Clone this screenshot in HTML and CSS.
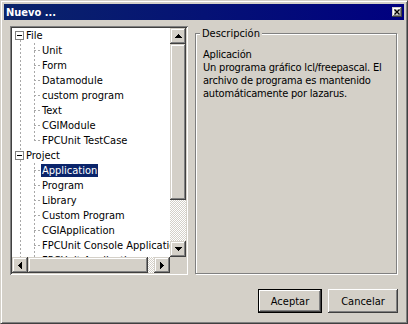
FILE: index.html
```html
<!DOCTYPE html>
<html lang="es">
<head>
    <meta charset="UTF-8">
    <title>Nuevo ...</title>
    <link rel="stylesheet" href="styles.css">
</head>
<body>
    <div class="window">
        <div class="titlebar">
            <span class="title">Nuevo ...</span>
            <span class="close raised">
                <svg width="6" height="6" viewBox="0 0 6 6"><path d="M0.5 0.5l5 5M5.5 0.5l-5 5" stroke="#000" stroke-width="1.3"/></svg>
            </span>
        </div>

        <div class="client">
            <div class="panes">
                <div class="tree sunken">
                    <div class="tree-body">
                        <div class="tree-view">
                            <div class="node">
                                <div class="row top"><span class="expander"></span><span class="label">File</span></div>
                                <div class="children">
                                    <div class="row leaf"><span class="label">Unit</span></div>
                                    <div class="row leaf"><span class="label">Form</span></div>
                                    <div class="row leaf"><span class="label">Datamodule</span></div>
                                    <div class="row leaf"><span class="label">custom program</span></div>
                                    <div class="row leaf"><span class="label">Text</span></div>
                                    <div class="row leaf"><span class="label">CGIModule</span></div>
                                    <div class="row leaf"><span class="label">FPCUnit TestCase</span></div>
                                </div>
                            </div>
                            <div class="node">
                                <div class="row top"><span class="expander"></span><span class="label">Project</span></div>
                                <div class="children more">
                                    <div class="row leaf"><span class="label selected">Application</span></div>
                                    <div class="row leaf"><span class="label">Program</span></div>
                                    <div class="row leaf"><span class="label">Library</span></div>
                                    <div class="row leaf"><span class="label">Custom Program</span></div>
                                    <div class="row leaf"><span class="label">CGIApplication</span></div>
                                    <div class="row leaf"><span class="label">FPCUnit Console Application</span></div>
                                    <div class="row leaf"><span class="label">FPCUnit Application</span></div>
                                </div>
                            </div>
                        </div>
                        <div class="vscroll">
                            <span class="sb-btn raised"><svg width="7" height="4"><path d="M3 0h1v1h1v1h1v1h1v1H0V3h1V2h1V1h1z"/></svg></span>
                            <span class="vthumb raised"></span>
                            <span class="track"></span>
                            <span class="sb-btn raised"><svg width="7" height="4"><path d="M0 0h7v1H6v1H5v1H4v1H3V3H2V2H1V1H0z"/></svg></span>
                        </div>
                    </div>
                    <div class="hscroll">
                        <span class="sb-btn raised"><svg width="4" height="7"><path d="M3 0h1v7H3V6H2V5H1V4H0V3h1V2h1V1h1z"/></svg></span>
                        <span class="hthumb raised"></span>
                        <span class="track"></span>
                        <span class="sb-btn raised"><svg width="4" height="7"><path d="M0 0h1v1h1v1h1v1h1v1H3v1H2v1H1v1H0z"/></svg></span>
                        <span class="corner"></span>
                    </div>
                </div>

                <div class="group">
                    <span class="legend">Descripción</span>
                    <p class="desc">Aplicación<br>Un programa gráfico lcl/freepascal. El<br>archivo de programa es mantenido<br>automáticamente por lazarus.</p>
                </div>
            </div>

            <div class="buttons">
                <button class="btn default">Aceptar</button>
                <button class="btn cancel">Cancelar</button>
            </div>
        </div>
    </div>
</body>
</html>
```

FILE: styles.css
```css
* {
    box-sizing: border-box;
}

body {
    margin: 0;
    background-color: #d4d0c8;
    font-family: "DejaVu Sans Condensed", "DejaVu Sans", sans-serif;
    font-stretch: condensed;
    font-size: 11px;
    color: #000;
}

/* classic 3d edges */
.raised {
    background-color: #d4d0c8;
    box-shadow: inset -1px -1px #404040, inset 1px 1px #d4d0c8,
                inset -2px -2px #808080, inset 2px 2px #fff;
}

.sunken {
    box-shadow: inset 1px 1px #808080, inset -1px -1px #fff,
                inset 2px 2px #404040, inset -2px -2px #d4d0c8;
}

.window {
    width: 408px;
    height: 324px;
    display: flex;
    flex-direction: column;
    padding: 3px;
    background-color: #d4d0c8;
    border: 1px solid;
    border-color: #d4d0c8 #404040 #404040 #d4d0c8;
    box-shadow: inset 1px 1px #fff, inset -1px -1px #808080;
}

.titlebar {
    height: 16px;
    display: flex;
    align-items: center;
    justify-content: space-between;
    padding: 0 2px 0 2px;
    background: linear-gradient(to right, #0a246a, #000080);
    color: #fff;
    font-weight: bold;
}

.close {
    width: 10px;
    height: 10px;
    display: flex;
    align-items: center;
    justify-content: center;
}

.close svg {
    display: block;
}

.client {
    flex: 1;
    display: flex;
    flex-direction: column;
}

.panes {
    display: flex;
    align-items: flex-start;
    padding: 6px 0 0 6px;
}

/* tree */
.tree {
    width: 178px;
    height: 249px;
    padding: 2px;
    display: flex;
    flex-direction: column;
    background-color: #fff;
}

.tree-body {
    flex: 1;
    display: flex;
    min-height: 0;
}

.tree-view {
    flex: 1;
    overflow: hidden;
    background-color: #fff;
    background-image: repeating-linear-gradient(to bottom, #a8a8a8 0 2px, transparent 2px 4px);
    background-size: 1px 100%;
    background-position: 8px 12px;
    background-repeat: no-repeat;
}

.row {
    height: 15px;
    display: flex;
    align-items: center;
    white-space: nowrap;
}

.row.top {
    padding-left: 3px;
}

.expander {
    width: 9px;
    height: 9px;
    margin-right: 1px;
    border: 1px solid #808080;
    background: #fff linear-gradient(#000, #000) center / 5px 1px no-repeat;
}

.children {
    background-image: repeating-linear-gradient(to bottom, #a8a8a8 0 2px, transparent 2px 4px);
    background-size: 1px calc(100% - 7px);
    background-position: 22px 0;
    background-repeat: no-repeat;
}

.children.more {
    background-size: 1px 100%;
}

.row.leaf {
    padding-left: 29px;
    background-image: repeating-linear-gradient(to right, #a8a8a8 0 2px, transparent 2px 4px);
    background-size: 6px 1px;
    background-position: 22px 7px;
    background-repeat: no-repeat;
}

.label {
    padding: 0 1px;
    line-height: 13px;
}

.label.selected {
    background-color: #0a246a;
    color: #fff;
}

.vscroll {
    width: 16px;
    display: flex;
    flex-direction: column;
}

.sb-btn {
    width: 16px;
    height: 16px;
    flex: none;
    display: flex;
    align-items: center;
    justify-content: center;
}

.sb-btn svg {
    display: block;
}

.vthumb {
    height: 156px;
    flex: none;
}

.track {
    flex: 1;
    background-color: #fff;
    background-image: conic-gradient(#d4d0c8 25%, #fff 0 50%, #d4d0c8 0 75%, #fff 0);
    background-size: 2px 2px;
}

.hscroll {
    height: 16px;
    display: flex;
}

.hthumb {
    width: 120px;
    flex: none;
}

.corner {
    width: 16px;
    background-color: #d4d0c8;
}

/* description group */
.group {
    width: 202px;
    height: 241px;
    margin: 7px 0 0 7px;
    border: 1px solid #808080;
    box-shadow: inset 1px 1px #fff, 1px 1px #fff;
}

.legend {
    display: block;
    width: fit-content;
    margin: -7px 0 0 4px;
    padding: 0 2px;
    line-height: 13px;
    background-color: #d4d0c8;
}

.desc {
    margin: 8px 0 0;
    padding-left: 7px;
    line-height: 13px;
    white-space: nowrap;
    letter-spacing: -0.2px;
}

/* bottom buttons */
.buttons {
    display: flex;
    justify-content: flex-end;
    gap: 6px;
    margin-top: 14px;
    padding-right: 6px;
}

.btn {
    height: 24px;
    padding: 0;
    border: none;
    background-color: #d4d0c8;
    font: inherit;
    color: #000;
    box-shadow: inset -1px -1px #404040, inset 1px 1px #fff,
                inset -2px -2px #808080, inset 2px 2px #d4d0c8;
}

.btn.default {
    width: 64px;
    border: 1px solid #000;
}

.btn.cancel {
    width: 70px;
}
```
